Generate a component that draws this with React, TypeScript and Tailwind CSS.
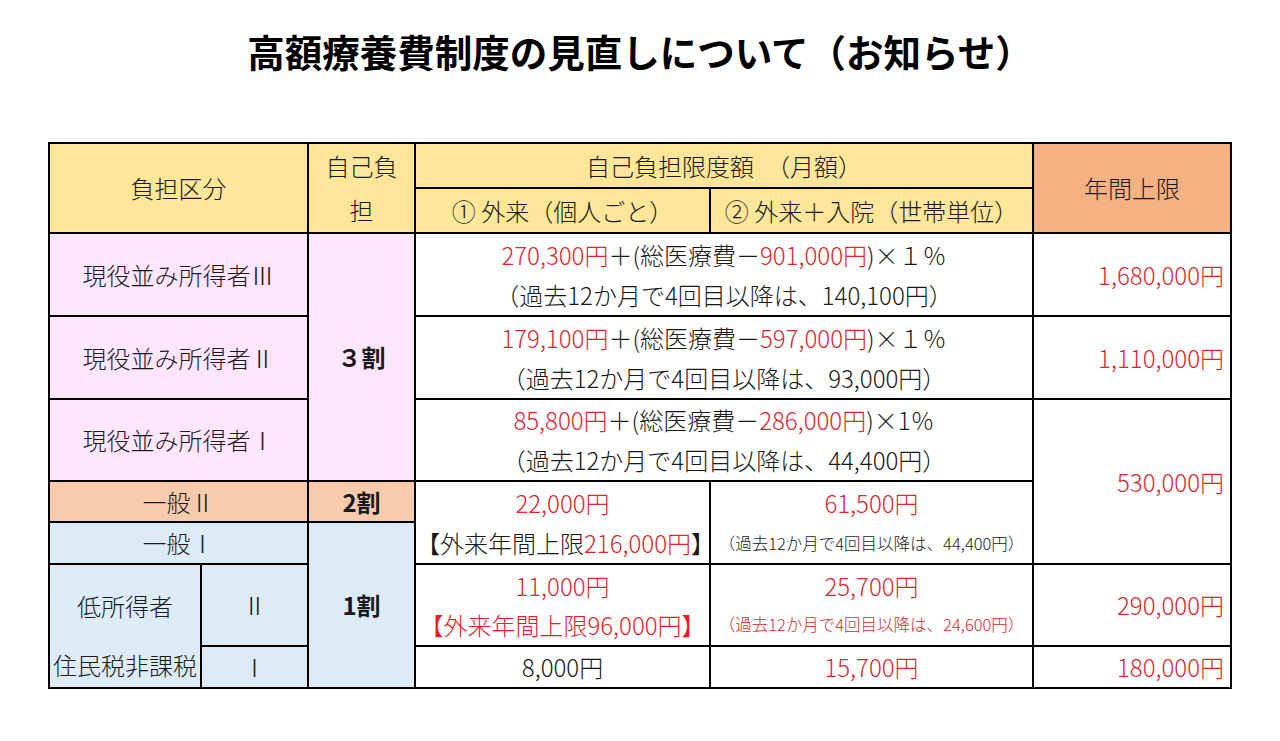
import React from "react";

const RED = "text-[#e0262c]";

function Red({ children }: { children: React.ReactNode }) {
  return <span className={RED}>{children}</span>;
}

const cell = "border-2 border-black p-0 text-center align-middle";

export default function App() {
  return (
    <div
      className="min-h-screen bg-white text-[#1a1a1a]"
      style={{ fontFamily: '"Noto Sans CJK JP", "Noto Sans", sans-serif' }}
    >
      <h1 className="pt-[24px] text-center text-[37.5px] font-bold leading-[54px] text-black">
        高額療養費制度の見直しについて（お知らせ）
      </h1>

      <table className="mx-auto mt-[64px] w-[1184px] table-fixed border-collapse text-[24px] font-light leading-[38px]">
        <colgroup>
          <col className="w-[152px]" />
          <col className="w-[107px]" />
          <col className="w-[107px]" />
          <col className="w-[295px]" />
          <col className="w-[323px]" />
          <col className="w-[198px]" />
        </colgroup>
        <tbody>
          {/* header */}
          <tr className="h-[45px]">
            <td rowSpan={2} colSpan={2} className={`${cell} bg-[#ffe699]`}>
              負担区分
            </td>
            <td rowSpan={2} className={`${cell} bg-[#ffe699] leading-[44px]`}>
              自己負
              <br />
              担
            </td>
            <td colSpan={2} className={`${cell} bg-[#ffe699]`}>
              自己負担限度額　（月額）
            </td>
            <td rowSpan={2} className={`${cell} bg-[#f4b183]`}>
              年間上限
            </td>
          </tr>
          <tr className="h-[45px]">
            <td className={`${cell} bg-[#ffe699]`}>① 外来（個人ごと）</td>
            <td className={`${cell} bg-[#ffe699] whitespace-nowrap`}>
              ② 外来＋入院（世帯単位）
            </td>
          </tr>

          {/* 現役並み */}
          <tr className="h-[83px]">
            <td colSpan={2} className={`${cell} bg-[#ffe6ff]`}>
              現役並み所得者Ⅲ
            </td>
            <td rowSpan={3} className={`${cell} bg-[#ffe6ff] font-bold`}>
              ３割
            </td>
            <td colSpan={2} className={`${cell} leading-[40px]`}>
              <div>
                <Red>270,300円</Red>＋(総医療費－<Red>901,000円</Red>)×１％
              </div>
              <div>（過去12か月で4回目以降は、140,100円）</div>
            </td>
            <td className={`${cell} !text-right pr-[6px]`}>
              <Red>1,680,000円</Red>
            </td>
          </tr>
          <tr className="h-[83px]">
            <td colSpan={2} className={`${cell} bg-[#ffe6ff]`}>
              現役並み所得者Ⅱ
            </td>
            <td colSpan={2} className={`${cell} leading-[40px]`}>
              <div>
                <Red>179,100円</Red>＋(総医療費－<Red>597,000円</Red>)×１％
              </div>
              <div>（過去12か月で4回目以降は、93,000円）</div>
            </td>
            <td className={`${cell} !text-right pr-[6px]`}>
              <Red>1,110,000円</Red>
            </td>
          </tr>
          <tr className="h-[82px]">
            <td colSpan={2} className={`${cell} bg-[#ffe6ff]`}>
              現役並み所得者Ⅰ
            </td>
            <td colSpan={2} className={`${cell} leading-[40px]`}>
              <div>
                <Red>85,800円</Red>＋(総医療費－<Red>286,000円</Red>)×1％
              </div>
              <div>（過去12か月で4回目以降は、44,400円）</div>
            </td>
            <td rowSpan={3} className={`${cell} !text-right pr-[6px]`}>
              <Red>530,000円</Red>
            </td>
          </tr>

          {/* 一般 */}
          <tr className="h-[41px]">
            <td colSpan={2} className={`${cell} bg-[#f8cbad]`}>
              一般Ⅱ
            </td>
            <td className={`${cell} bg-[#f8cbad] font-bold`}>2割</td>
            <td rowSpan={2} className={`${cell} leading-[40px]`}>
              <div>
                <Red>22,000円</Red>
              </div>
              <div className="whitespace-nowrap">
                【外来年間上限<Red>216,000円</Red>】
              </div>
            </td>
            <td rowSpan={2} className={`${cell} leading-[40px]`}>
              <div>
                <Red>61,500円</Red>
              </div>
              <div className="whitespace-nowrap text-[16.5px]">（過去12か月で4回目以降は、44,400円）</div>
            </td>
          </tr>
          <tr className="h-[42px]">
            <td colSpan={2} className={`${cell} bg-[#ddebf7]`}>
              一般Ⅰ
            </td>
            <td rowSpan={3} className={`${cell} bg-[#ddebf7] font-bold`}>
              1割
            </td>
          </tr>

          {/* 低所得者 */}
          <tr className="h-[82px]">
            <td rowSpan={2} className={`${cell} bg-[#ddebf7]`}>
              <div className="flex flex-col">
                <div className="flex h-[78px] items-center justify-center">低所得者</div>
                <div className="flex h-[40px] items-center justify-center whitespace-nowrap">
                  住民税非課税
                </div>
              </div>
            </td>
            <td className={`${cell} bg-[#ddebf7]`}>Ⅱ</td>
            <td className={`${cell} leading-[39px]`}>
              <div>
                <Red>11,000円</Red>
              </div>
              <div className="whitespace-nowrap text-[#ee1c25]">【外来年間上限96,000円】</div>
            </td>
            <td className={`${cell} leading-[39px]`}>
              <div>
                <Red>25,700円</Red>
              </div>
              <div className={`whitespace-nowrap text-[16.5px] ${RED}`}>（過去12か月で4回目以降は、24,600円）</div>
            </td>
            <td className={`${cell} !text-right pr-[6px]`}>
              <Red>290,000円</Red>
            </td>
          </tr>
          <tr className="h-[42px]">
            <td className={`${cell} bg-[#ddebf7]`}>Ⅰ</td>
            <td className={cell}>8,000円</td>
            <td className={cell}>
              <Red>15,700円</Red>
            </td>
            <td className={`${cell} !text-right pr-[6px]`}>
              <Red>180,000円</Red>
            </td>
          </tr>
        </tbody>
      </table>
    </div>
  );
}
